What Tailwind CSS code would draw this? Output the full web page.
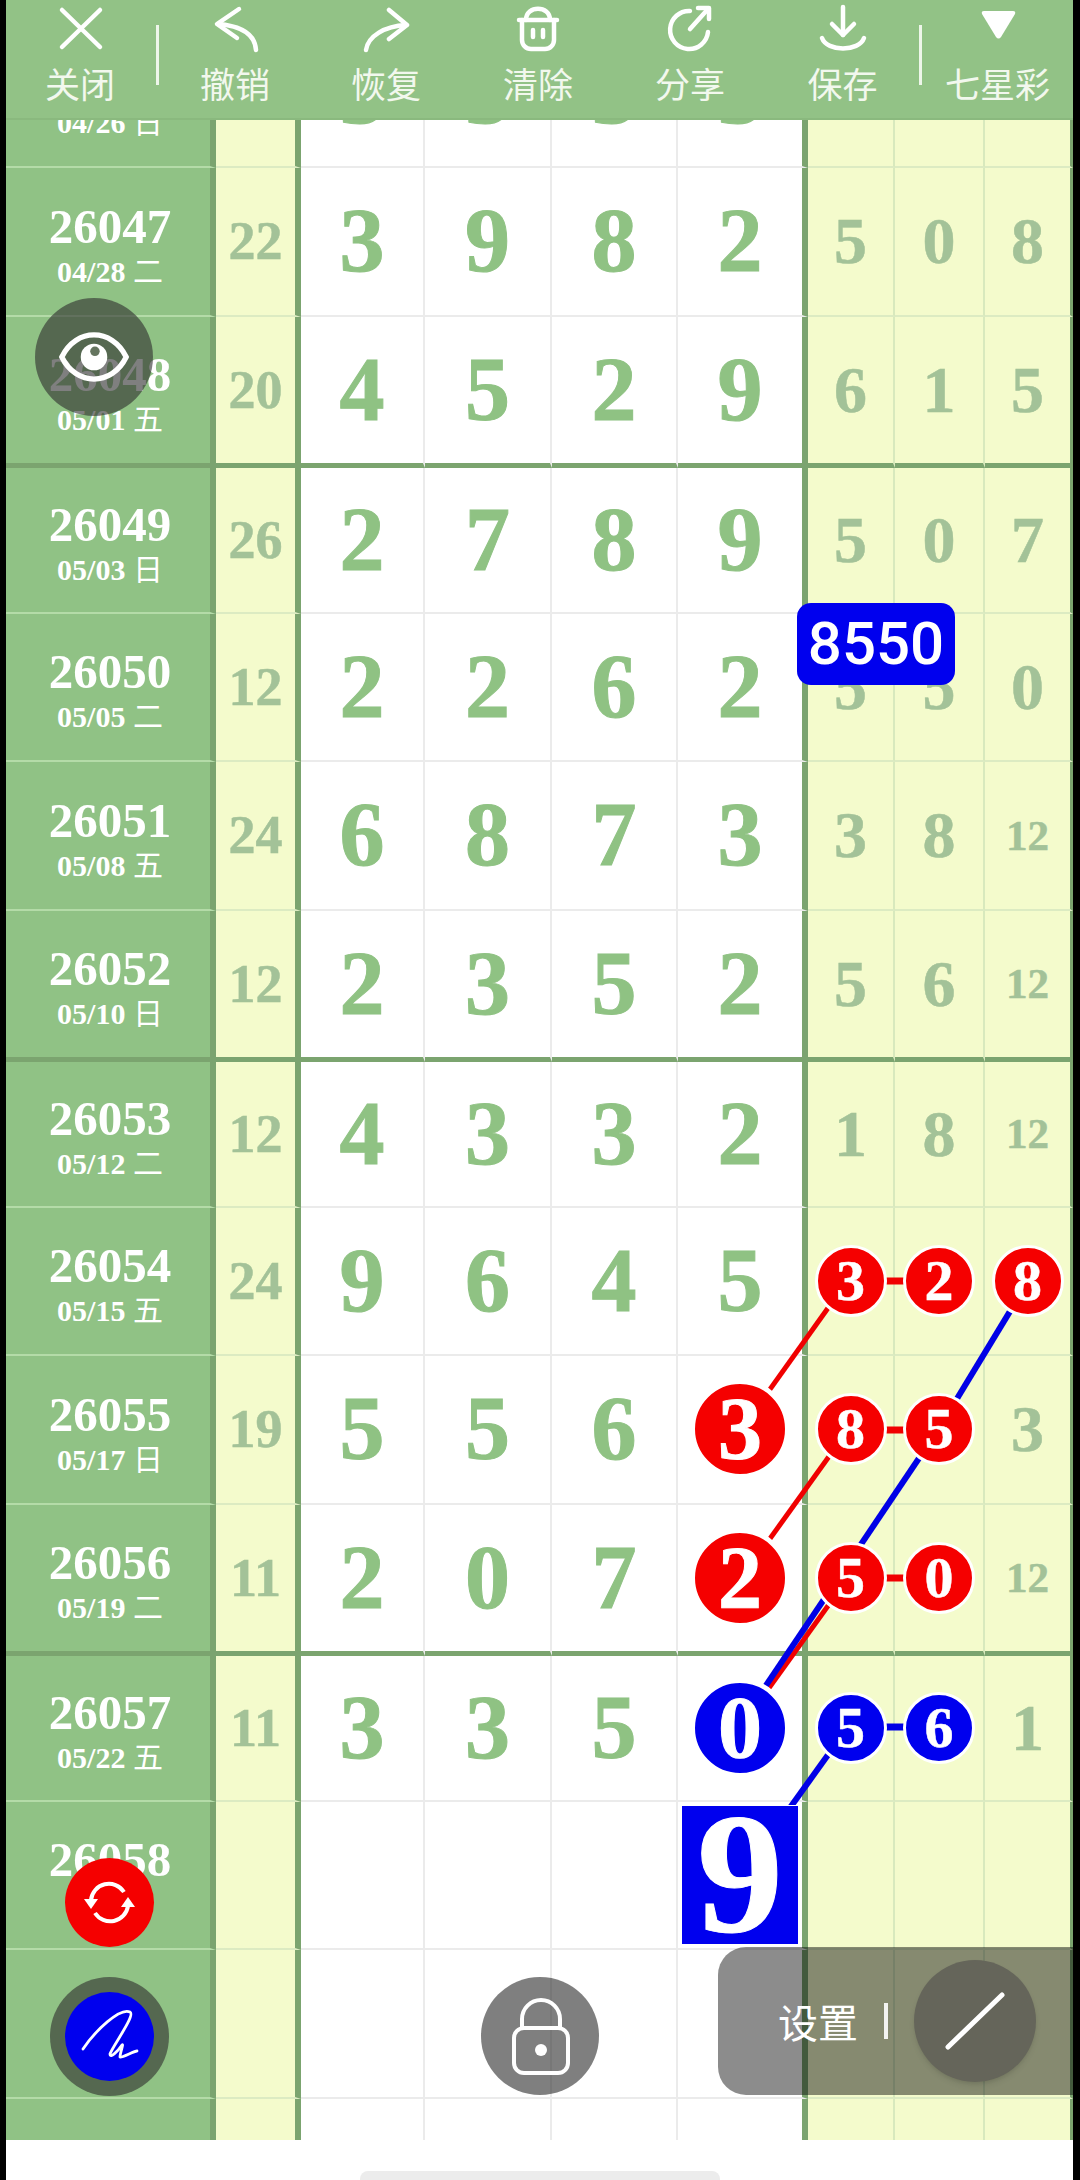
<!DOCTYPE html>
<html lang="zh">
<head>
    <meta charset="UTF-8">
    <meta name="viewport" content="width=device-width, initial-scale=1.0">
    <title>七星彩</title>
    <script src="https://cdn.jsdelivr.net/npm/@tailwindcss/browser@4"></script>
</head>
<body class="bg-black font-['Liberation_Serif','Noto_Sans_CJK_SC',serif]">
<div class="relative w-[1080px] h-[2180px] bg-black overflow-hidden">
  <div class="ml-[6px] w-[1067px] h-[2180px] bg-white flex flex-col">

    <!-- Toolbar -->
    <nav class="relative z-20 h-[120px] shrink-0 flex bg-[#92c286] border-b-2 border-[#8ab97e] text-[#f2f8ee] text-[35px] leading-none font-['Noto_Sans_CJK_SC',sans-serif]">
      <button class="w-[148px] flex flex-col items-center">
        <svg class="w-12 h-[52px] mt-[2px]" viewBox="0 0 48 52" fill="none" stroke="#fff" stroke-width="4.5" stroke-linecap="round" stroke-linejoin="round"><path d="M6 8L44 45M44 8L6 45"/></svg>
        <span class="mt-[11px]">关闭</span>
      </button>
      <div class="w-[3px] h-[60px] mt-[25px] ml-[2px] mr-px bg-[#eef6ea]"></div>
      <button class="w-[150px] flex flex-col items-center">
        <svg class="w-12 h-[52px] mt-[2px]" viewBox="0 0 48 52" fill="none" stroke="#fff" stroke-width="4.5" stroke-linecap="round" stroke-linejoin="round"><path d="M28 7L6 22L26 36"/><path d="M7 22C30 24 44 32 45 48"/></svg>
        <span class="mt-[11px]">撤销</span>
      </button>
      <button class="w-[152px] flex flex-col items-center">
        <svg class="w-12 h-[52px] mt-[2px]" viewBox="0 0 48 52" fill="none" stroke="#fff" stroke-width="4.5" stroke-linecap="round" stroke-linejoin="round"><path d="M27 8L45 23L27 37"/><path d="M4 48C6 34 23 24 44 23"/></svg>
        <span class="mt-[11px]">恢复</span>
      </button>
      <button class="w-[152px] flex flex-col items-center">
        <svg class="w-12 h-[52px] mt-[2px]" viewBox="0 0 48 52" fill="none" stroke="#fff" stroke-width="4.5" stroke-linecap="round" stroke-linejoin="round"><path d="M12 18C12 3 36 3 36 18"/><path d="M5 18H43"/><path d="M8 18V38a9 9 0 0 0 9 9H31a9 9 0 0 0 9-9V18"/><path d="M19 28v7M29 28v7"/></svg>
        <span class="mt-[11px]">清除</span>
      </button>
      <button class="w-[152px] flex flex-col items-center">
        <svg class="w-12 h-[52px] mt-[2px]" viewBox="0 0 48 52" fill="none" stroke="#fff" stroke-width="4.5" stroke-linecap="round" stroke-linejoin="round"><path d="M24 9A19 19 0 1 0 42 30"/><path d="M24 27L42 7"/><path d="M32 6H43V17"/></svg>
        <span class="mt-[11px]">分享</span>
      </button>
      <button class="w-[153px] flex flex-col items-center">
        <svg class="w-12 h-[52px] mt-[2px]" viewBox="0 0 48 52" fill="none" stroke="#fff" stroke-width="4.5" stroke-linecap="round" stroke-linejoin="round"><path d="M24 5V33"/><path d="M13 22L24 33L35 22"/><path d="M3 36C8 50 40 50 45 36"/></svg>
        <span class="mt-[11px]">保存</span>
      </button>
      <div class="w-[3px] h-[60px] mt-[25px] bg-[#eef6ea]"></div>
      <button class="flex-1 flex flex-col items-center">
        <svg class="w-12 h-[52px] mt-[2px]" viewBox="0 0 48 52" fill="#fff"><path d="M10 9H39Q42 9 41 12L27 35Q24.5 38 22 35L8 12Q7 9 10 9Z"/></svg>
        <span class="mt-[11px]">七星彩</span>
      </button>
    </nav>

    <!-- Chart rows -->
    <div id="chart" class="h-[2020px] shrink-0 overflow-hidden"></div>

    <!-- Home indicator -->
    <div class="h-[40px] flex justify-center">
      <div class="w-[360px] h-[9px] mt-[31px] rounded-t-lg bg-[#ececec]"></div>
    </div>
  </div>

  <!-- Draw lines between the hit numbers -->
  <svg class="absolute left-0 top-0 w-[1080px] h-[2180px] pointer-events-none" viewBox="0 0 1080 2180" fill="none" stroke-linecap="butt">
    <g stroke="#f00000" stroke-width="5">
      <path d="M741 1430L848 1280"/>
      <path d="M741 1579L848 1430"/>
      <path d="M741 1727L848 1578"/>
    </g>
    <g stroke="#f00000" stroke-width="7">
      <path d="M880 1281H906M880 1430H906M880 1578H906"/>
    </g>
    <g stroke="#0000e6" stroke-width="6">
      <path d="M1029 1280L938 1430"/>
      <path d="M938 1430L738 1727"/>
      <path d="M848 1727L741 1876"/>
    </g>
    <g stroke="#0000e6" stroke-width="7">
      <path d="M880 1727H906"/>
    </g>
  </svg>

  <!-- Number tooltip -->
  <div class="absolute z-30 left-[797px] top-[603px] w-[158px] h-[82px] rounded-[14px] bg-[#0000ee] text-white text-[60px] leading-none font-medium font-['Roboto',sans-serif] flex items-center justify-center">8550</div>

  <!-- Eye button -->
  <button class="absolute z-30 left-[35px] top-[298px] w-[118px] h-[118px] rounded-full bg-[#303030]/[0.62] flex items-center justify-center">
    <svg class="w-[72px] h-[52px]" viewBox="-2 -2 76 52" fill="none" stroke="#fff" stroke-width="5.5"><path d="M2 24C17-7 55-7 70 24C55 55 17 55 2 24Z"/><circle cx="36" cy="24" r="14" fill="#fff" stroke="none"/><circle cx="37" cy="18" r="5" fill="#65755f" stroke="none"/></svg>
  </button>

  <!-- Refresh button -->
  <button class="absolute z-30 left-[65px] top-[1858px] w-[89px] h-[89px] rounded-full bg-[#f50000] flex items-center justify-center">
    <svg class="w-14 h-14" viewBox="-28 -28 56 56" fill="none" stroke="#fff" stroke-width="4"><path d="M-19 -3A18 18 0 0 1 14 -11"/><path d="M18 3A18 18 0 0 1 -15 10"/><path d="M-26 -4L-12 -4L-19 6Z" fill="#fff" stroke="none"/><path d="M11 4L25 4L18 -6Z" fill="#fff" stroke="none"/></svg>
  </button>

  <!-- Pen button -->
  <button class="absolute z-30 left-[50px] top-[1977px] w-[119px] h-[119px] rounded-full bg-[#303030]/[0.62] flex items-center justify-center">
    <span class="w-[89px] h-[89px] rounded-full bg-[#0000ee] flex items-center justify-center">
      <svg class="w-[72px] h-[72px]" viewBox="-36 -36 72 72" fill="none" stroke="#fff" stroke-width="2.8" stroke-linecap="round" stroke-linejoin="round"><path d="M-27 12C-15 -6 10 -30 20 -25C26 -22 2 10 0 17C0 22 8 14 12 8C14 6 10 16 10 20C12 21 24 14 27 14"/></svg>
    </span>
  </button>

  <!-- Lock button -->
  <button class="absolute z-30 left-[481px] top-[1977px] w-[118px] h-[118px] rounded-full bg-[#303030]/[0.62] flex items-center justify-center">
    <svg class="w-20 h-20" viewBox="-40 -40 80 80" fill="none" stroke="#fff" stroke-width="4"><rect x="-26" y="-8" width="54" height="45" rx="10"/><path d="M-18 -8V-17A19 19 0 0 1 20 -17V-8"/><circle cx="1" cy="14" r="6" fill="#fff" stroke="none"/></svg>
  </button>

  <!-- Settings panel -->
  <div class="absolute z-30 left-[718px] top-[1947px] w-[355px] h-[148px] rounded-l-[28px] bg-black/45 flex items-center text-white">
    <span class="ml-[60px] text-[40px] leading-none font-['Noto_Sans_CJK_SC',sans-serif]">设置</span>
    <span class="ml-[26px] w-[4px] h-[36px] bg-white/90"></span>
    <span class="ml-[26px] w-[122px] h-[122px] rounded-full bg-[#65655a] shadow-md flex items-center justify-center">
      <svg class="w-[60px] h-[60px]" viewBox="0 0 60 60" fill="none" stroke="#fff" stroke-width="5" stroke-linecap="round"><path d="M3 56L57 4"/></svg>
    </span>
  </div>
</div>

<script>
    // id, date, weekday, sum, four main digits, three tail digits
    const rows = [
      ['26046', '04/26', '日', '', '3', '3', '3', '3', '', '', ''],
      ['26047', '04/28', '二', '22', '3', '9', '8', '2', '5', '0', '8'],
      ['26048', '05/01', '五', '20', '4', '5', '2', '9', '6', '1', '5'],
      ['26049', '05/03', '日', '26', '2', '7', '8', '9', '5', '0', '7'],
      ['26050', '05/05', '二', '12', '2', '2', '6', '2', '5', '5', '0'],
      ['26051', '05/08', '五', '24', '6', '8', '7', '3', '3', '8', '12'],
      ['26052', '05/10', '日', '12', '2', '3', '5', '2', '5', '6', '12'],
      ['26053', '05/12', '二', '12', '4', '3', '3', '2', '1', '8', '12'],
      ['26054', '05/15', '五', '24', '9', '6', '4', '5', 'r3', 'r2', 'r8'],
      ['26055', '05/17', '日', '19', '5', '5', '6', 'R3', 'r8', 'r5', '3'],
      ['26056', '05/19', '二', '11', '2', '0', '7', 'R2', 'r5', 'r0', '12'],
      ['26057', '05/22', '五', '11', '3', '3', '5', 'B0', 'b5', 'b6', '1'],
      ['26058', '', '', '', '', '', '', 'S9', '', '', ''],
      ['', '', '', '', '', '', '', '', '', '', ''],
      ['', '', '', '', '', '', '', '', '', '', '']
    ];

    const thickAfter = ['26048', '26052', '26056'];

    function mainDigit(v) {
      if (v[0] === 'R') return `<span class="relative z-10 w-[100px] h-[100px] rounded-full border-[5px] border-white bg-[#f50000] text-white text-[88px] leading-none font-bold flex items-center justify-center">${v[1]}</span>`;
      if (v[0] === 'B') return `<span class="relative z-10 w-[100px] h-[100px] rounded-full border-[5px] border-white bg-[#0000ee] text-white text-[88px] leading-none font-bold flex items-center justify-center">${v[1]}</span>`;
      if (v[0] === 'S') return `<span class="relative z-10 w-[118px] h-[140px] border border-white bg-[#0000ee] text-white text-[172px] leading-none font-bold flex items-center justify-center pb-[3px]">${v[1]}</span>`;
      return v;
    }

    function tailDigit(v) {
      if (v[0] === 'r') return `<span class="relative z-10 w-[72px] h-[72px] rounded-full border-[3px] border-white bg-[#f50000] text-white text-[58px] leading-none font-bold flex items-center justify-center">${v[1]}</span>`;
      if (v[0] === 'b') return `<span class="relative z-10 w-[72px] h-[72px] rounded-full border-[3px] border-white bg-[#0000ee] text-white text-[58px] leading-none font-bold flex items-center justify-center">${v[1]}</span>`;
      if (v === '12') return `<span class="text-[43px]">${v}</span>`;
      return v;
    }

    document.getElementById('chart').innerHTML = rows.map((r, i) => {
      const thick = thickAfter.includes(r[0]);
      const afterThick = i > 0 && thickAfter.includes(rows[i - 1][0]);
      const idCell = thick ? 'border-b-[5px] border-b-[#7ba46f]' : 'border-b-2 border-b-[#b4dba8]';
      const mainCell = thick ? 'border-b-[5px] border-b-[#7ba46f]' : 'border-b-2 border-b-[#ebebeb]';
      const tailCell = thick ? 'border-b-[5px] border-b-[#7ba46f]' : 'border-b-2 border-b-[#dcebc2]';
      const first = i === 0 ? '-mt-[100.5px]' : '';
      const height = thick ? 'h-[151px]' : afterThick ? 'h-[146px]' : 'h-[148.5px]';
      const weekday = r[2] ? ` <span class="font-normal">${r[2]}</span>` : '';
      return `<div class="grid grid-cols-[210px_85px_124px_127px_126px_130px_87px_90px_88px] ${height} ${first}">
        <div class="bg-[#90c285] border-r-[6px] border-r-[#7ba46f] ${idCell} text-white font-bold flex flex-col items-center justify-center pt-[6px] pl-[4px]">
          <div class="text-[49px] leading-none h-[49px]">${r[0]}</div>
          <div class="text-[30px] leading-none h-[30px] mt-[6px]">${r[1]}${weekday}</div>
        </div>
        <div class="bg-[#f4fbcc] border-r-[6px] border-r-[#7ba46f] ${tailCell} text-[#a3c298] text-[54px] leading-none font-bold flex items-center justify-center [-webkit-text-stroke:0.5px]">${r[3]}</div>
        <div class="border-r-2 border-r-[#ebebeb] ${mainCell} text-[#8fc283] text-[90px] leading-none font-bold flex items-center justify-center [-webkit-text-stroke:1px]">${r[4]}</div>
        <div class="border-r-2 border-r-[#ebebeb] ${mainCell} text-[#8fc283] text-[90px] leading-none font-bold flex items-center justify-center [-webkit-text-stroke:1px]">${r[5]}</div>
        <div class="border-r-2 border-r-[#ebebeb] ${mainCell} text-[#8fc283] text-[90px] leading-none font-bold flex items-center justify-center [-webkit-text-stroke:1px]">${r[6]}</div>
        <div class="border-r-[6px] border-r-[#7ba46f] ${mainCell} text-[#8fc283] text-[90px] leading-none font-bold flex items-center justify-center [-webkit-text-stroke:1px]">${mainDigit(r[7])}</div>
        <div class="bg-[#f4fbcc] border-r-2 border-r-[#d8e9bd] ${tailCell} text-[#a3c298] text-[66px] leading-none font-bold flex items-center justify-center [-webkit-text-stroke:0.5px]">${tailDigit(r[8])}</div>
        <div class="bg-[#f4fbcc] border-r-2 border-r-[#d8e9bd] ${tailCell} text-[#a3c298] text-[66px] leading-none font-bold flex items-center justify-center [-webkit-text-stroke:0.5px]">${tailDigit(r[9])}</div>
        <div class="bg-[#f4fbcc] border-r-[3px] border-r-[#7ba46f] ${tailCell} text-[#a3c298] text-[66px] leading-none font-bold flex items-center justify-center [-webkit-text-stroke:0.5px]">${tailDigit(r[10])}</div>
      </div>`;
    }).join('');
</script>
</body>
</html>
